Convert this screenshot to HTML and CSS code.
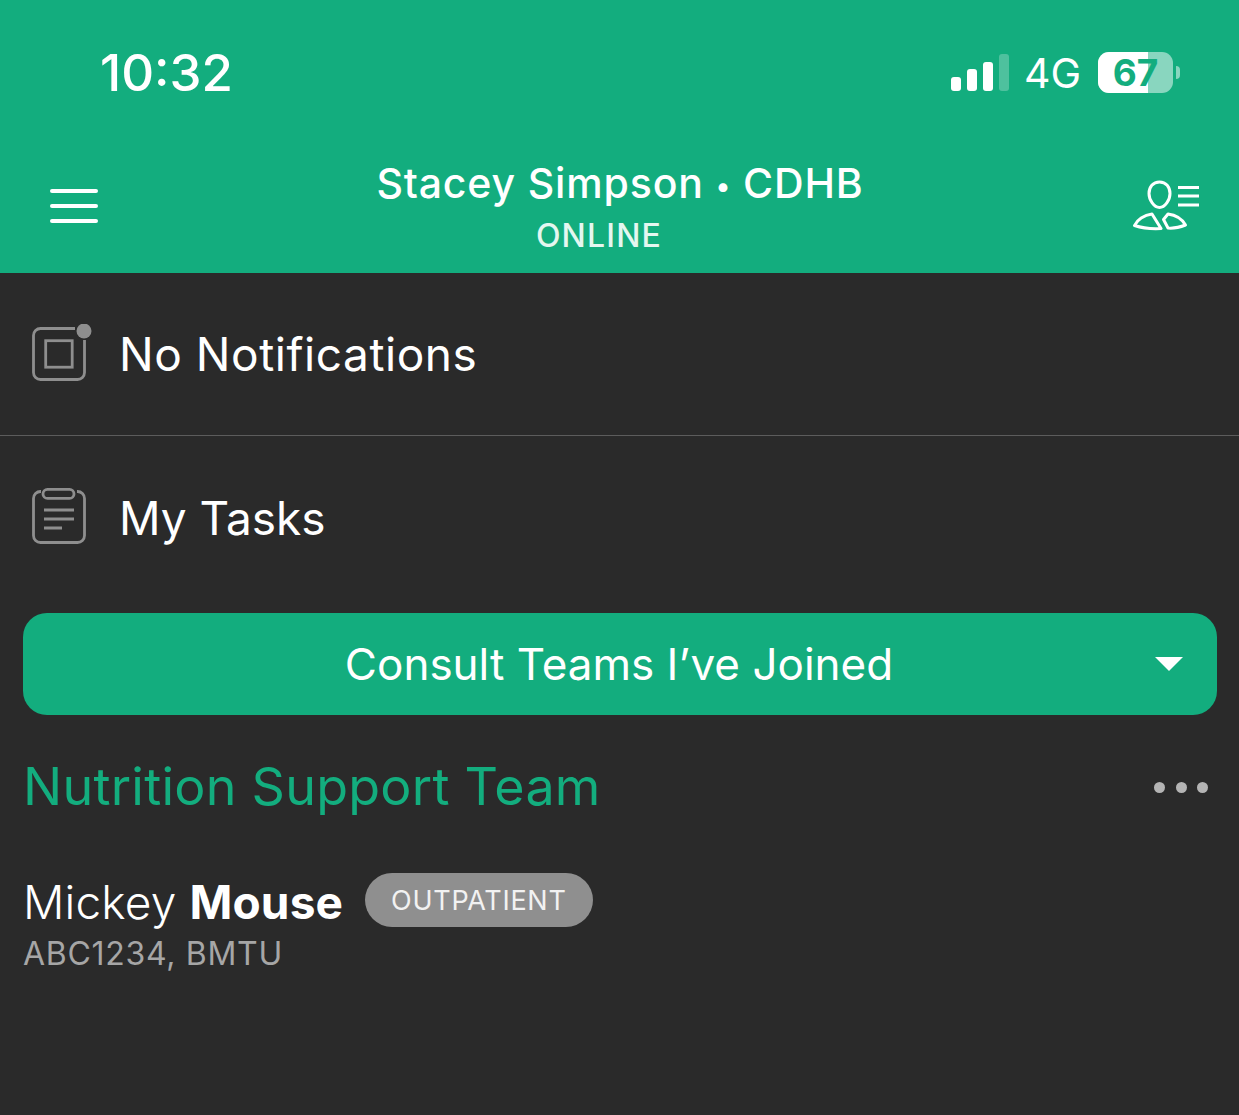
FILE: index.html
```html
<!DOCTYPE html>
<html lang="en">
<head>
    <meta charset="UTF-8">
    <meta name="viewport" content="width=device-width, initial-scale=1.0">
    <title>Consult Teams</title>
    <link rel="stylesheet" href="styles.css">
</head>
<body>
    <div id="app">
        <header class="top">
            <div class="status-bar">
                <span class="time">10:32</span>
                <div class="status-right">
                    <svg class="signal" width="58" height="37" viewBox="0 0 58 37">
                        <rect x="0" y="23" width="10" height="14" rx="3" fill="#fff"/>
                        <rect x="16" y="15" width="10" height="22" rx="3" fill="#fff"/>
                        <rect x="32" y="8" width="10" height="29" rx="3" fill="#fff"/>
                        <rect x="48" y="0" width="10" height="37" rx="3" fill="#fff" fill-opacity="0.25"/>
                    </svg>
                    <span class="network">4G</span>
                    <div class="battery">
                        <div class="battery-body">
                            <div class="battery-fill"></div>
                            <span class="battery-num">67</span>
                        </div>
                        <div class="battery-nub"></div>
                    </div>
                </div>
            </div>
            <div class="title-bar">
                <div class="menu-btn"><span></span><span></span><span></span></div>
                <div class="title-text">
                    <div class="title-name">Stacey Simpson <span class="title-sep">•</span> CDHB</div>
                    <div class="title-status">ONLINE</div>
                </div>
                <svg class="team-icon" width="68" height="52" viewBox="0 0 68 52" fill="none" stroke="#fff" stroke-width="3">
                    <path d="M26.5 2 C33 2 37 7 37 13.5 C37 20 32 27.5 26.5 27.5 C21 27.5 16 20 16 13.5 C16 7 20 2 26.5 2 Z"/>
                    <path d="M1.5 45.5 C4 40 11 35 19 34 L28 48.5 C19 49 9 48 1.5 45.5 Z" stroke-linejoin="round"/>
                    <path d="M30.5 39.5 L35 34 C43 35 49 39 52.5 45 C46 47.5 40 48.5 35 48 Z" stroke-linejoin="round"/>
                    <path d="M45 7.5 H66 M45 16 H66 M45 25 H66"/>
                </svg>
            </div>
        </header>

        <div class="row row-notify">
            <svg class="row-icon" width="62" height="60" viewBox="0 0 62 60" fill="none" stroke="#8e8e8e" stroke-width="2.8">
                <path d="M45 4.5 H10.5 A7 7 0 0 0 3.5 11.5 V48.5 A7 7 0 0 0 10.5 55.5 H47.5 A7 7 0 0 0 54.5 48.5 V16"/>
                <rect x="15.7" y="16.7" width="26.5" height="26.5"/>
                <circle cx="54" cy="7" r="7.5" fill="#8e8e8e" stroke="none"/>
            </svg>
            <span class="row-label">No Notifications</span>
        </div>
        <div class="row row-tasks">
            <svg class="row-icon" width="62" height="60" viewBox="0 0 62 60" fill="none" stroke="#8e8e8e" stroke-width="2.8">
                <path d="M11 3.5 H10.5 A7 7 0 0 0 3.5 10.5 V47.5 A7 7 0 0 0 10.5 54.5 H47.5 A7 7 0 0 0 54.5 47.5 V10.5 A7 7 0 0 0 47.5 3.5 H47"/>
                <rect x="13" y="1.4" width="31" height="9" rx="4.5"/>
                <path d="M14 22 H44 M14 31 H44 M14 40 H32"/>
            </svg>
            <span class="row-label">My Tasks</span>
        </div>

        <div class="consult-btn">
            <span>Consult Teams I’ve Joined</span>
            <div class="caret"></div>
        </div>

        <div class="team-head">
            <h2>Nutrition Support Team</h2>
            <div class="dots"><i></i><i></i><i></i></div>
        </div>

        <div class="patient">
            <div class="patient-line">
                <span class="patient-name">Mickey <b>Mouse</b></span>
                <span class="badge">OUTPATIENT</span>
            </div>
            <div class="patient-sub">ABC1234, BMTU</div>
        </div>
    </div>
</body>
</html>
```

FILE: styles.css
```css
body {
    margin: 0;
    font-family: Inter, Roboto, sans-serif;
    color: white;
    background-color: #2a2a2a;
    overflow: hidden;
}

#app {
    height: 1115px;
    width: 1239px;
}

.top {
    height: 273px;
    background-color: #13ad7e;
}

.status-bar {
    height: 145px;
    display: flex;
    justify-content: space-between;
    align-items: center;
    padding-left: 100px;
    padding-right: 59px;
}

.time {
    font-size: 51px;
    font-weight: 500;
}

.status-right {
    display: flex;
    align-items: center;
}

.signal {
    margin-right: 15px;
}

.network {
    font-size: 41px;
    margin-right: 17px;
}

.battery {
    display: flex;
    align-items: center;
}

.battery-body {
    position: relative;
    width: 75px;
    height: 41px;
    border-radius: 11px;
    background-color: rgba(255, 255, 255, 0.5);
    display: flex;
    justify-content: center;
    align-items: center;
}

.battery-fill {
    position: absolute;
    left: 0;
    top: 0;
    bottom: 0;
    width: 50px;
    border-radius: 11px 0 0 11px;
    background-color: white;
}

.battery-num {
    position: relative;
    font-size: 37px;
    line-height: 41px;
    font-weight: 700;
    color: #13ad7e;
}

.battery-nub {
    width: 4px;
    height: 13px;
    margin-left: 3px;
    border-radius: 0 6px 6px 0;
    background-color: rgba(255, 255, 255, 0.5);
}

.title-bar {
    position: relative;
    box-sizing: border-box;
    height: 128px;
    padding-top: 13px;
}

.menu-btn {
    position: absolute;
    left: 50px;
    top: 44px;
    width: 48px;
    height: 34px;
    display: flex;
    flex-direction: column;
    justify-content: space-between;
}

.menu-btn span {
    height: 4px;
    border-radius: 2px;
    background-color: white;
}

.title-text {
    text-align: center;
}

.title-name {
    font-size: 41px;
    font-weight: 500;
    letter-spacing: 0.85px;
    line-height: 50px;
    padding-left: 1px;
}

.title-sep {
    font-size: 28px;
    vertical-align: 2px;
}

.title-status {
    font-size: 32px;
    font-weight: 500;
    letter-spacing: 1.2px;
    line-height: 40px;
    margin-top: 5px;
    padding-right: 41px;
    color: #e4f7f0;
}

.team-icon {
    position: absolute;
    left: 1133px;
    top: 35px;
}

.row {
    display: flex;
    align-items: center;
    padding-left: 30px;
}

.row-notify {
    height: 162px;
    border-bottom: 1px solid #5c5c5c;
}

.row-notify .row-label {
    letter-spacing: 0.55px;
}

.row-tasks {
    height: 164px;
}

.row-icon {
    margin-right: 27px;
}

.row-label {
    font-size: 46px;
}

.consult-btn {
    position: relative;
    margin: 13px 22px 0 23px;
    height: 102px;
    border-radius: 24px;
    background-color: #13ad7e;
    display: flex;
    justify-content: center;
    align-items: center;
    font-size: 44px;
}

.consult-btn span {
    padding-right: 2px;
}

.caret {
    position: absolute;
    right: 34px;
    top: 44px;
    width: 0;
    height: 0;
    border-left: 14px solid transparent;
    border-right: 14px solid transparent;
    border-top: 14px solid white;
}

.team-head {
    display: flex;
    justify-content: space-between;
    align-items: center;
    padding: 40px 31px 0 23px;
}

.team-head h2 {
    margin: 0;
    font-size: 52px;
    font-weight: 400;
    letter-spacing: 0.25px;
    line-height: 64px;
    color: #13ad7e;
}

.dots {
    display: flex;
    gap: 10.5px;
}

.dots i {
    width: 11px;
    height: 11px;
    border-radius: 50%;
    background-color: #b4b4b4;
}

.patient {
    padding-left: 23px;
    margin-top: 54px;
}

.patient-line {
    display: flex;
    align-items: flex-start;
    height: 54px;
}

.patient-name {
    font-size: 46px;
    font-weight: 300;
    letter-spacing: 0.15px;
    line-height: 58px;
}

.patient-name b {
    font-weight: 700;
}

.badge {
    margin-left: 22px;
    height: 54px;
    padding: 0 26px;
    border-radius: 27px;
    background-color: #8f8f8f;
    display: flex;
    align-items: center;
    font-size: 27px;
    letter-spacing: 0.7px;
    color: #f2f2f2;
}

.patient-sub {
    font-size: 32px;
    letter-spacing: 0.7px;
    margin-top: 7px;
    color: #a6a6a6;
}
```
